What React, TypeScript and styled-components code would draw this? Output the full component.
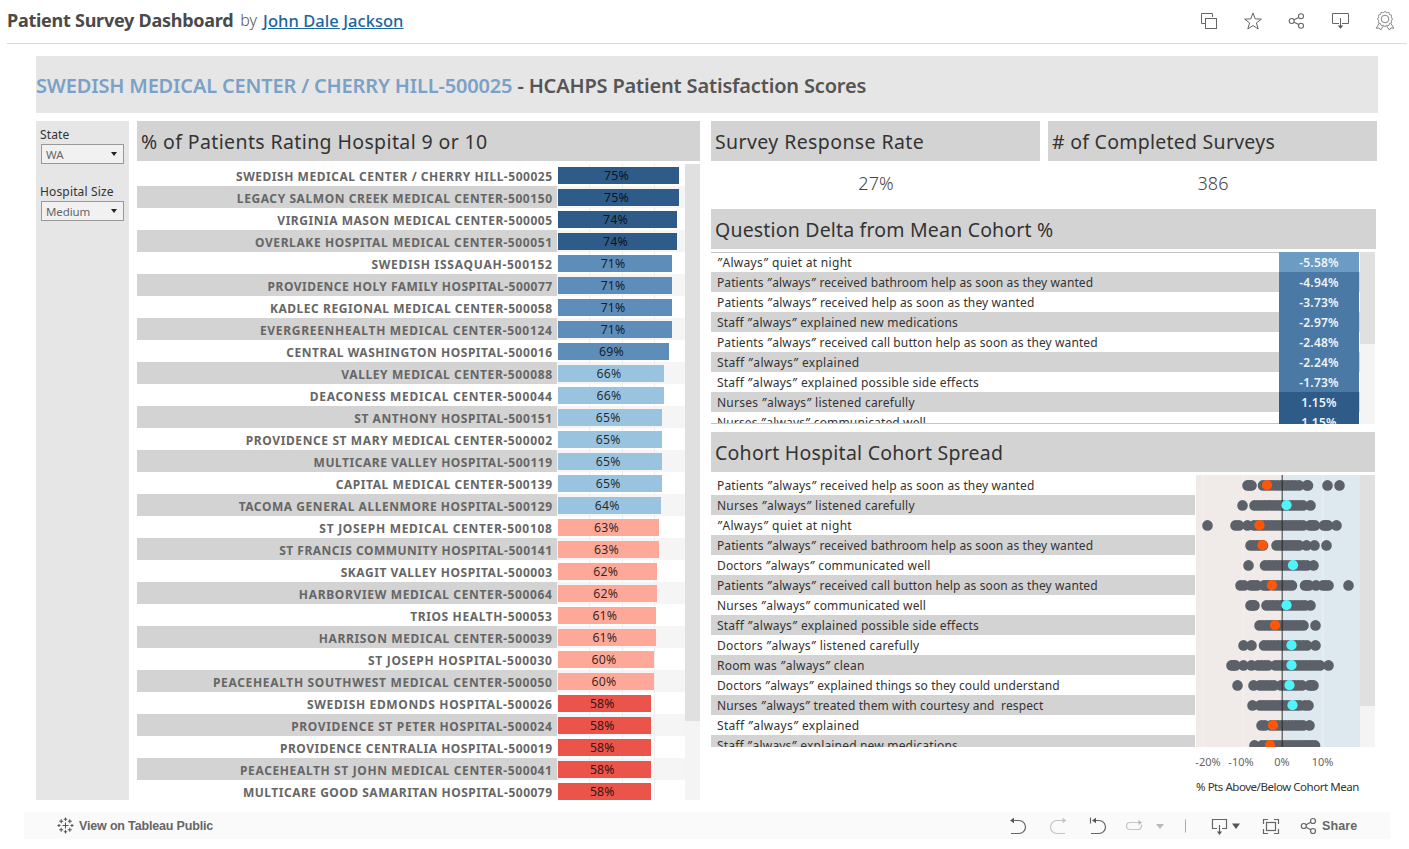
import React from 'react';
import styled, { createGlobalStyle } from 'styled-components';

const Global = createGlobalStyle`
  * { box-sizing: border-box; }
  body { margin: 0; background: #fff; font-family: 'Noto Sans', 'Open Sans', sans-serif; color: #333; }
`;

const Page = styled.div`
  width: 1409px;
  height: 849px;
  overflow: hidden;
`;
const TopBar = styled.header`
  height: 44px;
  margin: 0 2px 0 7px;
  border-bottom: 1px solid #dadada;
  display: flex;
  align-items: center;
  padding-bottom: 3px;
  white-space: nowrap;
`;
const Title = styled.h1`
  margin: 0;
  font-size: 18px;
  font-weight: 700;
  letter-spacing: -0.26px;
  color: #4a4a4a;
`;
const By = styled.span`
  margin: 0 6px 0 7px;
  font-size: 16px;
  font-weight: 300;
  color: #555;
`;
const Author = styled.a`
  font-size: 16.5px;
  font-weight: 500;
  letter-spacing: 0.05px;
  color: #1c669f;
  text-decoration: underline;
`;
const TopIcons = styled.div`
  margin-left: auto;
  margin-right: 12px;
  padding-top: 2px;
  display: flex;
  gap: 24px;
`;
const Svg = styled.svg`
  display: block;
  flex: none;
  overflow: visible;
`;
const Dashboard = styled.main`
  margin: 12px 31px 0 36px;
  width: 1342px;
`;
const Banner = styled.div`
  height: 57px;
  background: #e6e6e6;
  display: flex;
  align-items: center;
  padding-top: 1px;
  font-size: 20px;
  font-weight: 600;
  letter-spacing: -0.17px;
  white-space: pre;
  color: #555;
`;
const BannerName = styled.span`
  color: #7ba1c7;
`;
const Columns = styled.div`
  margin-top: 8px;
  display: flex;
  height: 679px;
`;
const Filters = styled.aside`
  width: 93px;
  background: #e6e6e6;
  padding: 5px 4px;
`;
const FilterLabel = styled.div`
  height: 18px;
  line-height: 18px;
  font-size: 12px;
  letter-spacing: 0.15px;
`;
const Select = styled.div`
  height: 20px;
  width: 83px;
  margin: 0 0 19px 1px;
  border: 1px solid #999;
  background: #f1f1f1;
  display: flex;
  align-items: center;
  justify-content: space-between;
  padding: 0 6px 0 4px;
  font-size: 11.5px;
  letter-spacing: -0.1px;
  color: #666;
`;
const Caret = styled.span`
  border: 3px solid transparent;
  border-top: 4px solid #222;
  border-bottom: 0;
`;
const Ratings = styled.section`
  margin-left: 8px;
  width: 563px;
`;
const PanelTitle = styled.h2<{ $w?: number; $track: number; $top?: number }>`
  margin: ${p => p.$top ?? 0}px 0 0;
  height: 40px;
  width: ${p => (p.$w ? p.$w + 'px' : '100%')};
  padding: 0 4px;
  background: #d3d3d3;
  display: flex;
  align-items: center;
  font-size: 19.5px;
  font-weight: 400;
  letter-spacing: ${p => p.$track}px;
  white-space: nowrap;
`;
const Scroller = styled.div<{ $h: number; $w?: number }>`
  margin-top: 3px;
  height: ${p => p.$h}px;
  width: ${p => (p.$w ? p.$w + 'px' : 'auto')};
  overflow: hidden;
  display: flex;
`;
const Rows = styled.div`
  flex: 1;
  min-width: 0;
`;
const Track = styled.div`
  width: 15px;
  background: #f4f4f4;
`;
const Thumb = styled.div<{ $h: number }>`
  height: ${p => p.$h}px;
  background: #e0e0e0;
`;
const RatingRow = styled.div<{ $alt: boolean }>`
  height: 22px;
  display: flex;
  align-items: stretch;
  background: ${p => (p.$alt ? '#f5f5f5' : '#fff')};
`;
const Hospital = styled.div<{ $alt: boolean; $track: number }>`
  width: 420px;
  padding: 2px 4.4px 0 0;
  text-align: right;
  line-height: 21px;
  font-size: 12px;
  font-weight: 700;
  letter-spacing: ${p => p.$track}px;
  white-space: nowrap;
  color: #666;
  background: ${p => (p.$alt ? '#d3d3d3' : '#fff')};
`;
const BarCell = styled.div`
  flex: 1;
  padding: 3px 0 2px 1px;
  background: linear-gradient(#eee, #eee) 32px 0 / 1px 100% no-repeat,
    linear-gradient(#eee, #eee) 65px 0 / 1px 100% no-repeat,
    linear-gradient(#eee, #eee) 97px 0 / 1px 100% no-repeat;
`;
const Bar = styled.div<{ $color: string }>`
  height: 17px;
  line-height: 17px;
  text-align: center;
  font-size: 12.3px;
  letter-spacing: 0.2px;
  padding-right: 4px;
  color: rgba(0, 0, 0, 0.8);
  background: ${p => p.$color};
`;
const Right = styled.section`
  margin-left: 11px;
  width: 667px;
`;
const Kpis = styled.div`
  display: flex;
  gap: 8px;
`;
const Kpi = styled.div`
  width: 329px;
`;
const KpiValue = styled.div`
  height: 48px;
  line-height: 45px;
  padding-left: 1px;
  text-align: center;
  font-size: 18px;
  font-weight: 300;
  letter-spacing: 0.1px;
  color: #444;
`;
const DeltaBox = styled(Scroller)`
  position: relative;
`;
const Rule = styled.div<{ $bottom?: boolean }>`
  position: absolute;
  left: 0;
  width: 568px;
  height: 1px;
  background: #c4c4c4;
  ${p => (p.$bottom ? 'bottom: 0;' : 'top: 0;')}
`;
const QuestionRow = styled.div<{ $alt: boolean }>`
  height: 20px;
  display: flex;
  background: ${p => (p.$alt ? '#d3d3d3' : '#fff')};
`;
const QuestionText = styled.div<{ $track: number }>`
  flex: 1;
  padding-left: 6px;
  line-height: 21px;
  font-size: 12px;
  letter-spacing: ${p => p.$track}px;
  white-space: pre;
`;
const Quote = styled.span`
  font-style: italic;
  letter-spacing: 1.2px;
`;
const Delta = styled.div<{ $color: string }>`
  width: 80px;
  margin-right: 1px;
  line-height: 22px;
  text-align: center;
  font-size: 12px;
  font-weight: 600;
  letter-spacing: 0.25px;
  color: #eef4fa;
  background: ${p => p.$color};
`;
const Axis = styled.div`
  margin-left: 484px;
  width: 165px;
`;
const AxisLabels = styled.div`
  display: grid;
  grid-template-columns: 26px 40px 42px 39px;
  height: 30px;
  line-height: 30px;
  font-size: 11px;
  color: #666;
`;
const Tick = styled.span`
  display: flex;
  justify-content: center;
`;
const AxisTitle = styled.div`
  padding-left: 1px;
  line-height: 20px;
  font-size: 11.5px;
  letter-spacing: -0.46px;
  white-space: nowrap;
`;
const Toolbar = styled.footer`
  margin: 12px 19px 0 24px;
  height: 27px;
  background: #fafafa;
  display: flex;
  align-items: center;
  font: 700 12.5px 'Liberation Sans', Arial, sans-serif;
  color: #666;
`;
const ViewOn = styled.span`
  margin-left: 5px;
  letter-spacing: -0.17px;
`;
const Tools = styled.div`
  margin-left: auto;
  margin-right: 33px;
  display: flex;
  align-items: center;
`;
const ShareLabel = styled.span`
  width: 35px;
  margin-left: 5px;
  letter-spacing: 0.1px;
`;

/* name, share of patients rating 9 or 10, letter spacing */
const hospitals: [string, number, number][] = [
  ['SWEDISH MEDICAL CENTER / CHERRY HILL-500025', 75, 0.53],
  ['LEGACY SALMON CREEK MEDICAL CENTER-500150', 75, 0.58],
  ['VIRGINIA MASON MEDICAL CENTER-500005', 74, 0.53],
  ['OVERLAKE HOSPITAL MEDICAL CENTER-500051', 74, 0.6],
  ['SWEDISH ISSAQUAH-500152', 71, 0.74],
  ['PROVIDENCE HOLY FAMILY HOSPITAL-500077', 71, 0.48],
  ['KADLEC REGIONAL MEDICAL CENTER-500058', 71, 0.54],
  ['EVERGREENHEALTH MEDICAL CENTER-500124', 71, 0.7],
  ['CENTRAL WASHINGTON HOSPITAL-500016', 69, 0.54],
  ['VALLEY MEDICAL CENTER-500088', 66, 0.6],
  ['DEACONESS MEDICAL CENTER-500044', 66, 0.69],
  ['ST ANTHONY HOSPITAL-500151', 65, 0.54],
  ['PROVIDENCE ST MARY MEDICAL CENTER-500002', 65, 0.6],
  ['MULTICARE VALLEY HOSPITAL-500119', 65, 0.53],
  ['CAPITAL MEDICAL CENTER-500139', 65, 0.57],
  ['TACOMA GENERAL ALLENMORE HOSPITAL-500129', 64, 0.55],
  ['ST JOSEPH MEDICAL CENTER-500108', 63, 0.71],
  ['ST FRANCIS COMMUNITY HOSPITAL-500141', 63, 0.5],
  ['SKAGIT VALLEY HOSPITAL-500003', 62, 0.55],
  ['HARBORVIEW MEDICAL CENTER-500064', 62, 0.66],
  ['TRIOS HEALTH-500053', 61, 0.63],
  ['HARRISON MEDICAL CENTER-500039', 61, 0.63],
  ['ST JOSEPH HOSPITAL-500030', 60, 0.72],
  ['PEACEHEALTH SOUTHWEST MEDICAL CENTER-500050', 60, 0.67],
  ['SWEDISH EDMONDS HOSPITAL-500026', 58, 0.65],
  ['PROVIDENCE ST PETER HOSPITAL-500024', 58, 0.64],
  ['PROVIDENCE CENTRALIA HOSPITAL-500019', 58, 0.53],
  ['PEACEHEALTH ST JOHN MEDICAL CENTER-500041', 58, 0.63],
  ['MULTICARE GOOD SAMARITAN HOSPITAL-500079', 58, 0.5],
];
const barColor = (v: number) =>
  v >= 74 ? '#2e5b88' : v >= 69 ? '#5d8db8' : v >= 64 ? '#9ac3e0' : v >= 60 ? '#fda899' : '#ea544a';

const questions = {
  quiet: ['”Always” quiet at night', 0.29],
  bathroom: ['Patients ”always” received bathroom help as soon as they wanted', 0.1],
  help: ['Patients ”always” received help as soon as they wanted', 0.13],
  meds: ['Staff ”always” explained new medications', 0.18],
  call: ['Patients ”always” received call button help as soon as they wanted', 0.11],
  explained: ['Staff ”always” explained', 0.3],
  effects: ['Staff ”always” explained possible side effects', 0.22],
  nurseListen: ['Nurses ”always” listened carefully', 0.23],
  nurseComm: ['Nurses ”always” communicated well', 0.14],
  docComm: ['Doctors ”always” communicated well', 0.14],
  docListen: ['Doctors ”always” listened carefully', 0.23],
  clean: ['Room was ”always” clean', 0.21],
  docExplain: ['Doctors ”always” explained things so they could understand', 0.07],
  courtesy: ['Nurses ”always” treated them with courtesy and  respect', 0.12],
} as const;
type QuestionId = keyof typeof questions;

const Question = ({ id }: { id: QuestionId }) => {
  const [text, track] = questions[id];
  return (
    <QuestionText $track={track}>
      {text.split('”').flatMap((part, i) => (i ? [<Quote key={i}>”</Quote>, part] : [part]))}
    </QuestionText>
  );
};

const deltas: [QuestionId, string, string][] = [
  ['quiet', '-5.58%', '#6c9bc3'],
  ['bathroom', '-4.94%', '#4b79a6'],
  ['help', '-3.73%', '#4b79a6'],
  ['meds', '-2.97%', '#4b79a6'],
  ['call', '-2.48%', '#4b79a6'],
  ['explained', '-2.24%', '#4b79a6'],
  ['effects', '-1.73%', '#4b79a6'],
  ['nurseListen', '1.15%', '#2e5b88'],
  ['nurseComm', '1.15%', '#2e5b88'],
];

const LOW = '#ff5608';
const HIGH = '#4ff4fb';
/* Each spread row: question, runs of adjacent hospitals, the selected hospital, its colour. */
const spread: [QuestionId, [number, number][], number, string][] = [
  ['help', [[51.5, 55.5], [67, 99], [103, 103], [111, 112], [131.5, 131.5], [143.5, 143.5]], 71, LOW],
  ['nurseListen', [[46.5, 46.5], [58.5, 107], [114.5, 114.5]], 90.5, HIGH],
  ['quiet', [[11.5, 11.5], [39.5, 43], [51.5, 51.5], [58, 107], [114, 119], [128, 132], [140.5, 140.5]], 63.5, LOW],
  ['bathroom', [[54.5, 67], [80.5, 103], [110.5, 110.5], [118.5, 118.5], [130.5, 130.5]], 66.5, LOW],
  ['docComm', [[52.5, 52.5], [69, 111], [117.5, 117.5]], 97, HIGH],
  ['call', [[44.5, 48], [55, 61], [68, 73], [78, 96], [109, 113], [120, 120], [127, 132.5], [152.5, 152.5]], 76, LOW],
  ['nurseComm', [[54.5, 58.5], [70.5, 109], [114.5, 114.5]], 90.5, HIGH],
  ['effects', [[63.5, 107.5], [119.5, 119.5]], 79, LOW],
  ['docListen', [[47.5, 47.5], [55.5, 55.5], [68, 111], [119.5, 119.5]], 95.5, HIGH],
  ['clean', [[35.5, 39.5], [47.5, 47.5], [55.5, 55.5], [62, 72], [79.5, 124], [132.5, 132.5]], 95.5, HIGH],
  ['docExplain', [[41.5, 41.5], [57.5, 57.5], [64, 78], [85, 106], [113.5, 117.5]], 93.5, HIGH],
  ['courtesy', [[56.5, 56.5], [64, 104], [109, 112.5]], 96.5, HIGH],
  ['explained', [[65.5, 69], [75, 107], [113.5, 113.5]], 77, LOW],
  ['meds', [[58.5, 58.5], [66, 110], [113, 119]], 74, LOW],
];

const fill = ([a, b]: [number, number]) => {
  const n = Math.max(1, Math.ceil((b - a) / 3.6));
  return a === b ? [a] : Array.from({ length: n + 1 }, (_, i) => a + ((b - a) * i) / n);
};

const ChartSvg = styled(Svg)`
  margin-left: 1px;
  overflow: hidden;
`;

const SpreadChart = () => (
  <ChartSvg width={164} height={272} viewBox="0 0 164 272">
    <rect width="86" height="272" fill="#f0eae8" />
    <rect x="86" width="78" height="272" fill="#dde9ef" />
    {[6.5, 46.5, 126.5].map(x => (
      <rect key={x} x={x} width="1" height="272" fill="#fff" opacity="0.45" />
    ))}
    {spread.map(([id, runs], r) => (
      <g key={id} fill="#5b6069">
        {runs.flatMap(fill).map((x, i) => (
          <circle key={i} cx={x} cy={10.4 + r * 20} r="5.3" />
        ))}
      </g>
    ))}
    <rect x="85.5" width="1.5" height="272" fill="#222" opacity="0.6" />
    {spread.map(([id, , x, c], r) => (
      <circle key={id} cx={x} cy={10.2 + r * 20} r="5.1" fill={c} />
    ))}
  </ChartSvg>
);

const badgePath = Array.from({ length: 49 }, (_, i) => {
  const t = (i / 48) * Math.PI * 2;
  const r = 7 + 0.6 * Math.cos(t * 12);
  return `${i ? 'L' : 'M'}${(10 + r * Math.cos(t)).toFixed(2)} ${(8 + r * Math.sin(t)).toFixed(2)}`;
}).join('');

const crosses: [number, number, number][] = [
  [8.5, 8.5, 3], [8.5, 2.2, 1.7], [8.5, 14.8, 1.7], [2, 8.5, 1.5], [15, 8.5, 1.5],
  [4.2, 4.2, 2], [12.8, 4.2, 2], [4.2, 12.8, 2], [12.8, 12.8, 2],
];

const TopActions = () => (
  <TopIcons>
    <Svg width={20} height={20} viewBox="0 0 20 20" fill="none" stroke="#666">
      <path d="M6.500 12.500H2.500V2.500H13.500V6" />
      <rect x="6.500" y="7.500" width="11" height="10" />
    </Svg>
    <Svg width={20} height={20} viewBox="0 0 20 20" fill="none" stroke="#666">
      <path d="M10 1.900 12.200 7.900 18.400 8.100 13.400 11.900 15.200 18 10 14.500 4.800 18 6.600 11.900 1.600 8.100 7.800 7.900Z" />
    </Svg>
    <Svg width={20} height={20} viewBox="0 0 20 20" fill="none" stroke="#666" strokeWidth="1.100">
      <circle cx="4.700" cy="10" r="2.500" />
      <circle cx="14" cy="5.200" r="2.500" />
      <circle cx="14" cy="14.800" r="2.500" />
      <path d="M7 8.800 11.800 6.400M7 11.200 11.800 13.600" />
    </Svg>
    <Svg width={20} height={20} viewBox="0 0 20 20" fill="none" stroke="#666">
      <path d="M8 12.500H1.500V2.500H17.500V12.500H11M9.500 7V16" />
      <path d="M6.800 14.400H12.200L9.500 17.800Z" fill="#555" stroke="none" />
    </Svg>
    <Svg width={20} height={20} viewBox="0 0 20 20" fill="none" stroke="#777" strokeWidth="0.900">
      <path d={badgePath} />
      <circle cx="10" cy="8" r="3.800" />
      <path d="M4 12.500 1.200 17.300 4.200 16.900 5.600 19.100 8.400 15M16 12.500 18.800 17.300 15.800 16.900 14.400 19.100 11.600 15" />
    </Svg>
  </TopIcons>
);

const MarkSvg = styled(Svg)`
  margin-left: 33px;
`;

const BottomBar = () => (
  <Toolbar>
    <MarkSvg width={17} height={17} viewBox="0 0 17 17" stroke="#555" strokeWidth="1.1">
      {crosses.map(([x, y, s], i) => (
        <path key={i} d={`M${x - s} ${y}H${x + s}M${x} ${y - s}V${y + s}`} />
      ))}
    </MarkSvg>
    <ViewOn>View on Tableau Public</ViewOn>
    <Tools>
      <Svg width={307} height={27} viewBox="1010 0 307 27" fill="none" stroke="#666" strokeWidth="1.2">
        <path d="M1011 21.5H1019A6.3 6.3 0 0 0 1019 8.5H1012" />
        <path d="M1014 5.8V11.2L1010 8.5Z" fill="#555" stroke="none" />
        <g stroke="#c4c4c4">
          <path d="M1065 21.5H1057A6.3 6.3 0 0 1 1057 8.5H1064" />
          <path d="M1062.5 5.8V11.2L1066.5 8.5Z" fill="#c4c4c4" stroke="none" />
        </g>
        <path d="M1091 21.5H1099A6.3 6.3 0 0 0 1099 8.5H1093M1090.5 5.5V11.5" />
        <path d="M1096 5.8V11.2L1092 8.5Z" fill="#555" stroke="none" />
        <g stroke="#c4c4c4">
          <path d="M1139 10.5H1130A3.5 3.5 0 0 0 1130 17.5H1138A3.5 3.5 0 0 0 1141.500 14V12.500" />
          <path d="M1138.5 7.8V13.2L1142 10.5Z" fill="#bbb" stroke="none" />
          <path d="M1156 12H1164L1160 17Z" fill="#bbb" stroke="none" />
          <path d="M1185.5 7.5V20.5" strokeWidth="1" stroke="#aaa" />
        </g>
        <path d="M1217 16.5H1212.5V7.5H1226.500V16.5H1222M1219.5 13V21" />
        <path d="M1217 19.5H1222L1219.5 23Z" fill="#555" stroke="none" />
        <path d="M1232 11.5H1240L1236 17Z" fill="#555" stroke="none" />
        <path d="M1263.5 12V7.5H1268M1274 7.5H1278.5V12M1278.5 17V21.5H1274M1268 21.5H1263.5V17" />
        <rect x="1266.5" y="10.5" width="9" height="8" />
        <circle cx="1303.8" cy="14" r="2.5" />
        <circle cx="1313" cy="9" r="2.5" />
        <circle cx="1313" cy="19" r="2.5" />
        <path d="M1306 12.8 1310.8 10.2M1306 15.2 1310.8 17.8" />
      </Svg>
      <ShareLabel>Share</ShareLabel>
    </Tools>
  </Toolbar>
);

export default function App() {
  return (
    <Page>
      <Global />
      <TopBar>
        <Title>Patient Survey Dashboard</Title>
        <By>by</By>
        <Author>John Dale Jackson</Author>
        <TopActions />
      </TopBar>
      <Dashboard>
        <Banner>
          <BannerName>SWEDISH MEDICAL CENTER / CHERRY HILL-500025</BannerName> - HCAHPS Patient Satisfaction Scores
        </Banner>
        <Columns>
          <Filters>
            <FilterLabel>State</FilterLabel>
            <Select>WA<Caret /></Select>
            <FilterLabel>Hospital Size</FilterLabel>
            <Select>Medium<Caret /></Select>
          </Filters>
          <Ratings>
            <PanelTitle $track={0.38}>% of Patients Rating Hospital 9 or 10</PanelTitle>
            <Scroller $h={636}>
              <Rows>
                {hospitals.map(([name, v, track], i) => (
                  <RatingRow key={name} $alt={i % 2 === 1}>
                    <Hospital $alt={i % 2 === 1} $track={track}>{name}</Hospital>
                    <BarCell>
                      <Bar $color={barColor(v)} style={{ width: v * 1.65 - 3 }}>{v}%</Bar>
                    </BarCell>
                  </RatingRow>
                ))}
              </Rows>
              <Track><Thumb $h={557} /></Track>
            </Scroller>
          </Ratings>
          <Right>
            <Kpis>
              <Kpi>
                <PanelTitle $track={0.4}>Survey Response Rate</PanelTitle>
                <KpiValue>27%</KpiValue>
              </Kpi>
              <Kpi>
                <PanelTitle $track={0.26}># of Completed Surveys</PanelTitle>
                <KpiValue>386</KpiValue>
              </Kpi>
            </Kpis>
            <PanelTitle $w={665} $track={0.18}>Question Delta from Mean Cohort %</PanelTitle>
            <DeltaBox $h={172} $w={664}>
              <Rows>
                {deltas.map(([id, v, c], i) => (
                  <QuestionRow key={id} $alt={i % 2 === 1}>
                    <Question id={id} />
                    <Delta $color={c}>{v}</Delta>
                  </QuestionRow>
                ))}
              </Rows>
              <Track><Thumb $h={92} /></Track>
              <Rule />
              <Rule $bottom />
            </DeltaBox>
            <PanelTitle $w={664} $track={0.24} $top={8}>Cohort Hospital Cohort Spread</PanelTitle>
            <Scroller $h={272} $w={664}>
              <Rows>
                {spread.map(([id], i) => (
                  <QuestionRow key={id} $alt={i % 2 === 1}>
                    <Question id={id} />
                  </QuestionRow>
                ))}
              </Rows>
              <SpreadChart />
              <Track><Thumb $h={231} /></Track>
            </Scroller>
            <Axis>
              <AxisLabels>
                <Tick>-20%</Tick><Tick>-10%</Tick><Tick>0%</Tick><Tick>10%</Tick>
              </AxisLabels>
              <AxisTitle>% Pts Above/Below Cohort Mean</AxisTitle>
            </Axis>
          </Right>
        </Columns>
      </Dashboard>
      <BottomBar />
    </Page>
  );
}
